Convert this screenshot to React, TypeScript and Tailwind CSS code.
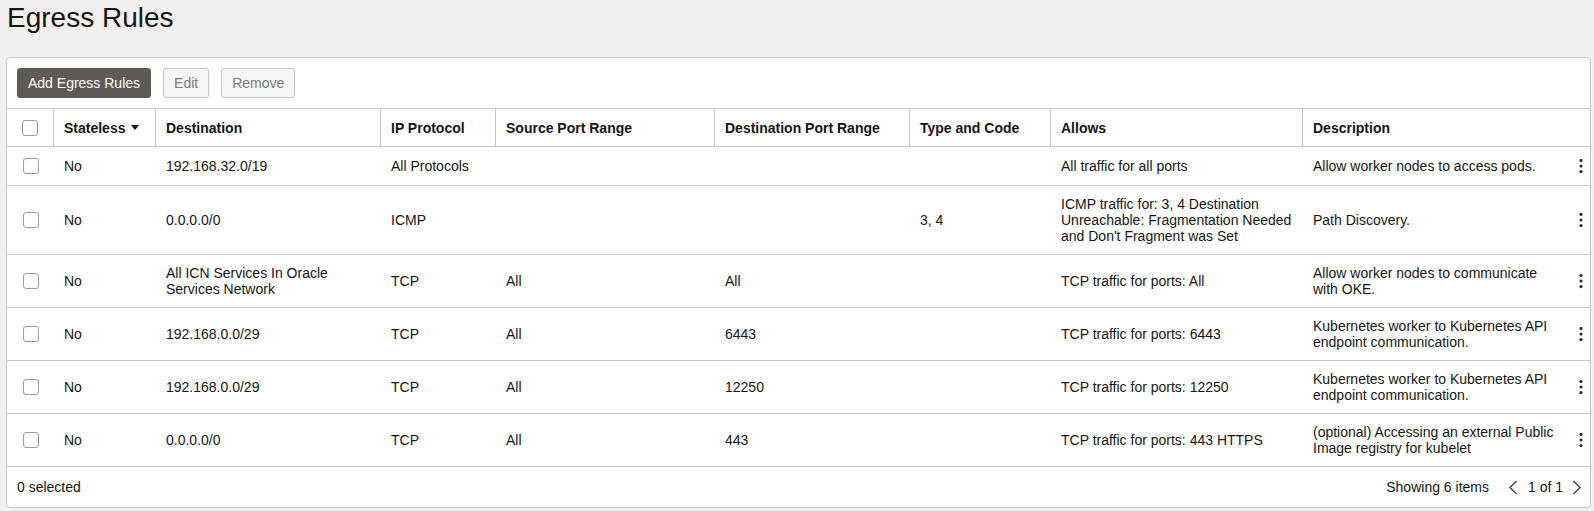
import React from 'react';

const cols = 'grid grid-cols-[47px_102px_225px_115px_219px_195px_141px_252px_287px]';

const rules = [
  {
    dest: '192.168.32.0/19',
    proto: 'All Protocols',
    src: '',
    dport: '',
    type: '',
    allows: 'All traffic for all ports',
    desc: 'Allow worker nodes to access pods.',
  },
  {
    dest: '0.0.0.0/0',
    proto: 'ICMP',
    src: '',
    dport: '',
    type: '3, 4',
    allows: "ICMP traffic for: 3, 4 Destination Unreachable: Fragmentation Needed and Don't Fragment was Set",
    desc: 'Path Discovery.',
  },
  {
    dest: 'All ICN Services In Oracle Services Network',
    proto: 'TCP',
    src: 'All',
    dport: 'All',
    type: '',
    allows: 'TCP traffic for ports: All',
    desc: 'Allow worker nodes to communicate with OKE.',
  },
  {
    dest: '192.168.0.0/29',
    proto: 'TCP',
    src: 'All',
    dport: '6443',
    type: '',
    allows: 'TCP traffic for ports: 6443',
    desc: 'Kubernetes worker to Kubernetes API endpoint communication.',
  },
  {
    dest: '192.168.0.0/29',
    proto: 'TCP',
    src: 'All',
    dport: '12250',
    type: '',
    allows: 'TCP traffic for ports: 12250',
    desc: 'Kubernetes worker to Kubernetes API endpoint communication.',
  },
  {
    dest: '0.0.0.0/0',
    proto: 'TCP',
    src: 'All',
    dport: '443',
    type: '',
    allows: 'TCP traffic for ports: 443 HTTPS',
    desc: '(optional) Accessing an external Public Image registry for kubelet',
  },
];

function Checkbox() {
  return <span className="block w-[16px] h-[16px] rounded-[3px] border border-[#9c9c9c] bg-white" />;
}

function Kebab() {
  return (
    <button className="w-[16px] h-[18px] mr-[1px] flex items-center justify-center shrink-0">
      <svg width="4" height="16" viewBox="0 0 4 16">
        <circle cx="2" cy="2.4" r="1.55" fill="#2a2a2a" />
        <circle cx="2" cy="8" r="1.55" fill="#2a2a2a" />
        <circle cx="2" cy="13.6" r="1.55" fill="#2a2a2a" />
      </svg>
    </button>
  );
}

function Chevron({ dir }: { dir: 'left' | 'right' }) {
  return (
    <svg width="10" height="15" viewBox="0 0 10 15" className="shrink-0">
      <path
        d={dir === 'left' ? 'M8.5 1 L2 7.5 L8.5 14' : 'M1.5 1 L8 7.5 L1.5 14'}
        fill="none"
        stroke="#4a4a4a"
        strokeWidth="1.5"
      />
    </svg>
  );
}

export default function App() {
  const headers = [
    'Stateless',
    'Destination',
    'IP Protocol',
    'Source Port Range',
    'Destination Port Range',
    'Type and Code',
    'Allows',
    'Description',
  ];

  return (
    <div className="min-h-screen bg-[#f1f0ee] font-['Liberation_Sans',Arial,sans-serif] text-[#161513] text-[14px] leading-[16px]">
      <h1 className="h-[57px] pl-[7px] pt-[1px] text-[28px] leading-[33px] font-normal text-[#161513]">
        Egress Rules
      </h1>

      <div className="ml-[6px] w-[1585px] bg-white border border-[#c8c8c8] rounded-[4px]">
        <div className="flex gap-[12px] p-[10px] border-b border-[#c8c8c8]">
          <button className="h-[30px] px-[10px] rounded-[3px] border border-[#5f5a55] bg-[#5f5a55] text-white whitespace-nowrap">
            Add Egress Rules
          </button>
          <button className="h-[30px] px-[10px] rounded-[3px] border border-[#c4c4c4] bg-[#f5f5f4] text-[#7c7c7c]">
            Edit
          </button>
          <button className="h-[30px] px-[10px] rounded-[3px] border border-[#c4c4c4] bg-[#f5f5f4] text-[#7c7c7c]">
            Remove
          </button>
        </div>

        <div className={`${cols} border-b border-[#c8c8c8] font-bold`}>
          <div className="h-[37px] flex items-center justify-center border-r border-[#c8c8c8]">
            <Checkbox />
          </div>
          {headers.map((h, i) => (
            <div
              key={h}
              className={`h-[37px] flex items-center pl-[10px] ${i < headers.length - 1 ? 'border-r border-[#c8c8c8]' : ''}`}
            >
              {h}
              {i === 0 && (
                <svg width="8" height="5" viewBox="0 0 8 5" className="ml-[6px]">
                  <path d="M0 0 H8 L4 5 Z" fill="#161513" />
                </svg>
              )}
            </div>
          ))}
        </div>

        {rules.map((r, idx) => (
          <div key={idx} className={`${cols} border-b border-[#c8c8c8]`}>
            <div className="flex items-center justify-center py-[10px]">
              <Checkbox />
            </div>
            <div className="flex items-center pl-[10px] py-[10px]">No</div>
            <div className="flex items-center pl-[10px] pr-[10px] py-[10px]">{r.dest}</div>
            <div className="flex items-center pl-[10px] py-[10px]">{r.proto}</div>
            <div className="flex items-center pl-[10px] py-[10px]">{r.src}</div>
            <div className="flex items-center pl-[10px] py-[10px]">{r.dport}</div>
            <div className="flex items-center pl-[10px] py-[10px]">{r.type}</div>
            <div className="flex items-center pl-[10px] pr-[6px] py-[10px]">{r.allows}</div>
            <div className="flex items-center pl-[10px] py-[10px]">
              <div className="flex-1 pr-[12px]">{r.desc}</div>
              <Kebab />
            </div>
          </div>
        ))}

        <div className="h-[40px] flex items-center justify-between pl-[10px] pr-[8px]">
          <span>0 selected</span>
          <div className="flex items-center">
            <span>Showing 6 items</span>
            <span className="ml-[19px]">
              <Chevron dir="left" />
            </span>
            <span className="ml-[10px]">1 of 1</span>
            <span className="ml-[9px]">
              <Chevron dir="right" />
            </span>
          </div>
        </div>
      </div>
    </div>
  );
}
